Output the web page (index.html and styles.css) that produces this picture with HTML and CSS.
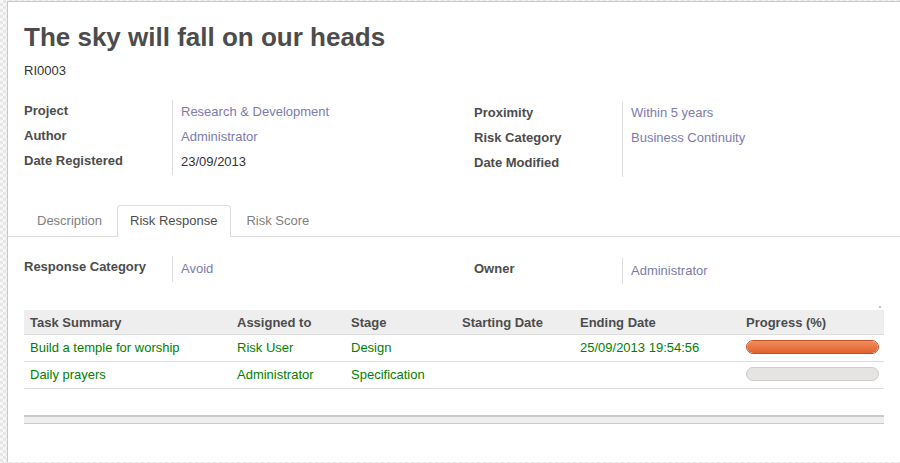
FILE: index.html
```html
<!DOCTYPE html>
<html>
<head>
<meta charset="utf-8">
<link rel="stylesheet" href="styles.css">
</head>
<body>
<div class="sheet">
  <h1 class="title">The sky will fall on our heads</h1>
  <div class="ref">RI0003</div>
  <div class="groups">
    <div class="group">
      <div class="lbl">Project</div><div class="val link">Research &amp; Development</div>
      <div class="lbl">Author</div><div class="val link">Administrator</div>
      <div class="lbl">Date Registered</div><div class="val">23/09/2013</div>
    </div>
    <div class="group group-right">
      <div class="lbl">Proximity</div><div class="val link">Within 5 years</div>
      <div class="lbl">Risk Category</div><div class="val link">Business Continuity</div>
      <div class="lbl">Date Modified</div><div class="val"></div>
    </div>
  </div>
  <div class="tabs">
    <div class="tab">Description</div>
    <div class="tab active">Risk Response</div>
    <div class="tab">Risk Score</div>
  </div>
  <div class="groups resp">
    <div class="group">
      <div class="lbl">Response Category</div><div class="val link">Avoid</div>
    </div>
    <div class="group group-right">
      <div class="lbl">Owner</div><div class="val link">Administrator</div>
    </div>
  </div>
  <div class="dotrow"><span class="dot"></span></div>
  <table class="tasks">
    <colgroup>
      <col style="width:207px"><col style="width:114px"><col style="width:111px"><col style="width:118px"><col style="width:166px"><col>
    </colgroup>
    <thead>
      <tr><th>Task Summary</th><th>Assigned to</th><th>Stage</th><th>Starting Date</th><th>Ending Date</th><th>Progress (%)</th></tr>
    </thead>
    <tbody>
      <tr><td>Build a temple for worship</td><td>Risk User</td><td>Design</td><td></td><td>25/09/2013 19:54:56</td><td><div class="bar"><div class="fill" style="width:100%"></div></div></td></tr>
      <tr><td>Daily prayers</td><td>Administrator</td><td>Specification</td><td></td><td></td><td><div class="bar"></div></td></tr>
    </tbody>
  </table>
  <div class="tfoot"></div>
</div>
</body>
</html>
```

FILE: styles.css
```css
html, body {
  margin: 0;
  height: 100%;
}
body {
  font-family: "Liberation Sans", Arial, sans-serif;
  font-size: 13px;
  color: #4c4c4c;
  background-color: #f4f4f4;
  background-image: conic-gradient(#e6e6e6 25%, #f7f7f7 0 50%, #e6e6e6 0 75%, #f7f7f7 0);
  background-size: 6px 6px;
  overflow: hidden;
}
.sheet {
  margin: 1px 0 0 7px;
  border-top: 1px solid #c8c8c8;
  border-left: 1px solid #c8c8c8;
  background: #fff;
  height: calc(100% - 2px);
  padding: 0 16px;
  box-sizing: border-box;
}
.title {
  margin: 0;
  padding-top: 18px;
  font-size: 26px;
  line-height: 34px;
  font-weight: bold;
  color: #4c4c4c;
}
.ref {
  margin-top: 9px;
  line-height: 16px;
  color: #333;
}
.groups {
  display: grid;
  grid-template-columns: 450px 1fr;
  margin-top: 21px;
}
.group {
  display: grid;
  grid-template-columns: 148px 1fr;
  grid-auto-rows: 25px;
}
.group-right {
  padding-top: 2px;
}
.lbl {
  font-weight: bold;
  color: #4c4c4c;
  line-height: 22px;
}
.val {
  border-left: 1px solid #ddd;
  padding-left: 8px;
  line-height: 22px;
  padding-top: 1px;
  color: #333;
}
.group-right .val {
  padding-top: 0;
}
.link {
  color: #7c7bad;
}
.tabs {
  display: flex;
  margin: 28px -16px 0;
  padding: 0 16px;
  border-bottom: 1px solid #ddd;
  height: 31px;
}
.tab {
  padding: 0 12px;
  margin-right: 2px;
  line-height: 30px;
  color: #808080;
  border: 1px solid transparent;
  border-bottom: none;
  border-radius: 4px 4px 0 0;
  height: 31px;
  box-sizing: border-box;
}
.tab.active {
  color: #4c4c4c;
  border-color: #ddd;
  background: #fff;
  height: 32px;
  padding: 0 13px 0 12px;
}
.resp {
  margin-top: 19px;
}
.resp .group {
  grid-auto-rows: 26px;
}
.resp .val {
  padding-top: 2px;
}
.dotrow {
  display: flex;
  justify-content: flex-end;
  height: 3px;
  margin-top: 22px;
  padding-right: 3px;
}
.dot {
  width: 2px;
  height: 2px;
  background: #c4c4c4;
}
.tasks {
  width: 100%;
  border-collapse: collapse;
  table-layout: fixed;
  margin-top: 1px;
}
.tasks th {
  background: #eee;
  text-align: left;
  font-weight: bold;
  color: #4c4c4c;
  height: 24px;
  padding: 0 6px;
  border-bottom: 1px solid #ddd;
}
.tasks td {
  color: #008000;
  height: 24px;
  padding: 0 5px 2px 6px;
  border-bottom: 1px solid #ddd;
  white-space: nowrap;
}
.bar {
  height: 12px;
  border: 1px solid #cfcbc7;
  background: #e6e4e2;
  border-radius: 7px;
  overflow: hidden;
}
.fill {
  height: 100%;
  background: linear-gradient(#f38c5b, #e0622f);
  border-radius: 7px;
}
.bar:has(.fill) {
  border-color: #b9542a;
}
.tfoot {
  margin-top: 26px;
  height: 6px;
  background: #eee;
  border-top: 2px solid #cacaca;
  border-bottom: 1px solid #cacaca;
}
```
